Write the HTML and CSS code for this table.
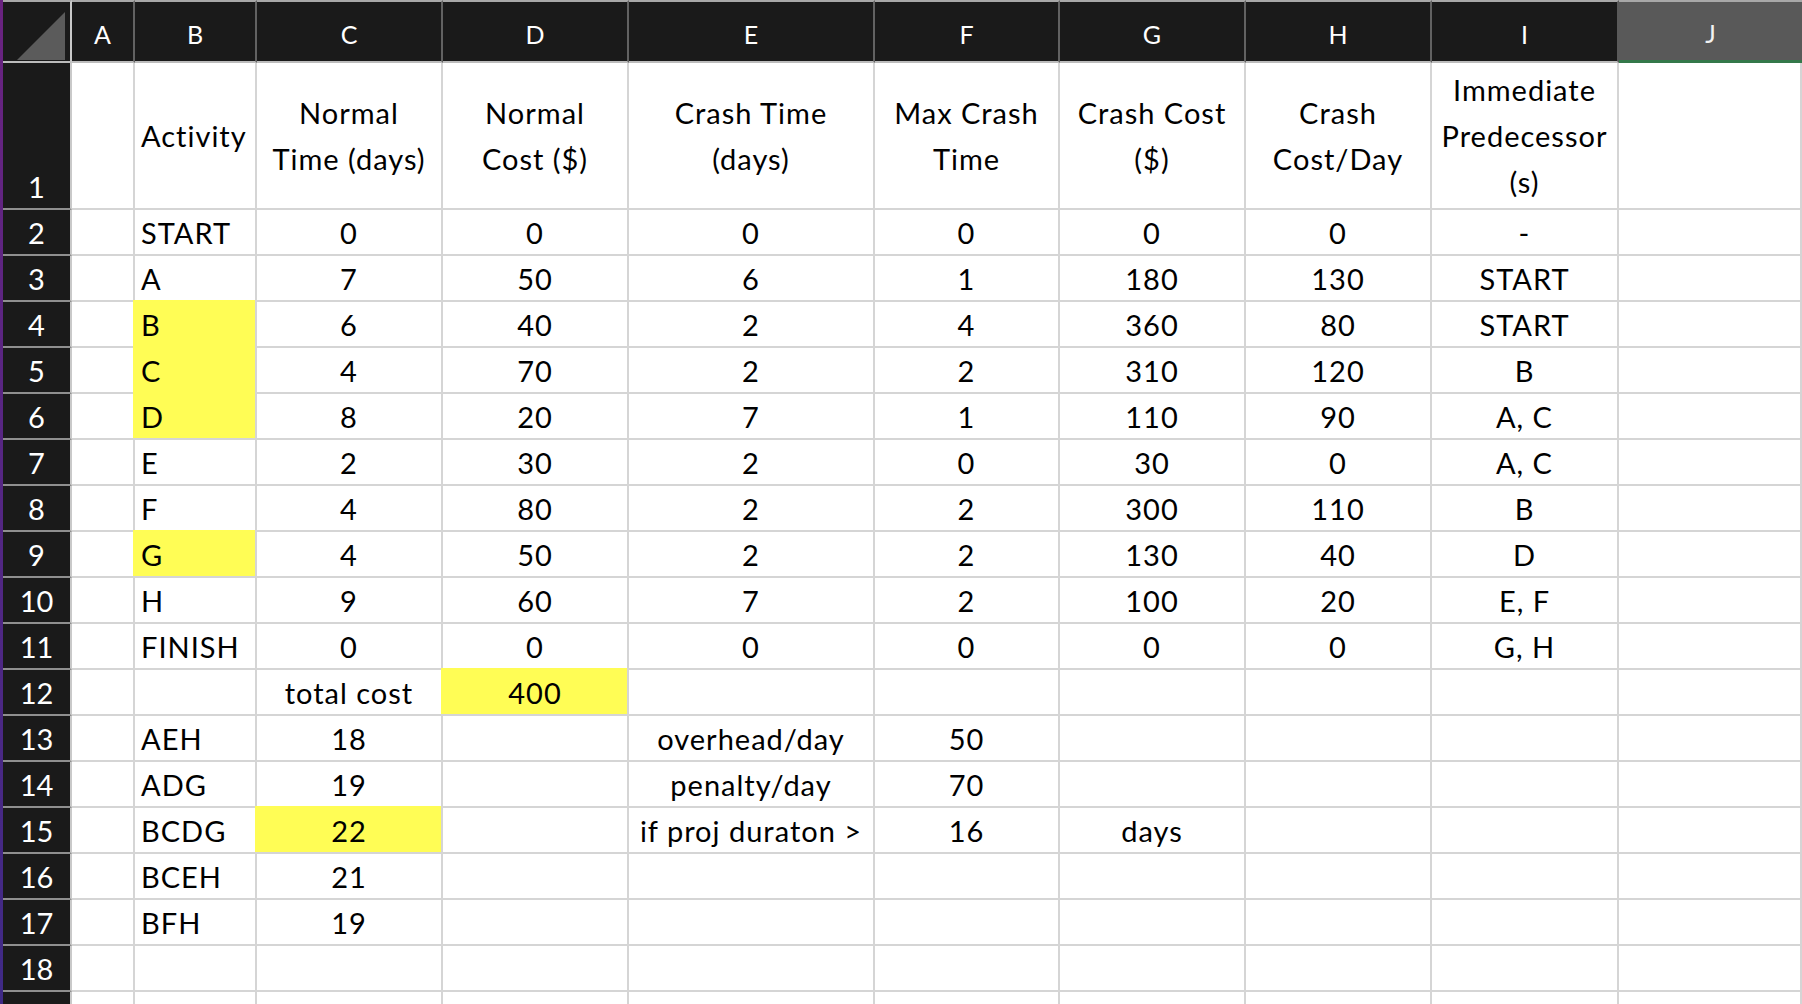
FILE: index.html
```html
<!DOCTYPE html>
<html lang="en">
<head>
<meta charset="utf-8">
<title>Crashing worksheet</title>
<link rel="stylesheet" href="styles.css">
</head>
<body>
<div class="page">
  <div class="strip"></div>
  <div class="sheet">
    <div class="ch corner"><svg width="52" height="52" viewBox="0 0 52 52"><polygon points="48,4 48,52 0,52" fill="#5b5b5b"/></svg></div>
    <div class="ch">A</div><div class="ch">B</div><div class="ch">C</div><div class="ch">D</div><div class="ch">E</div><div class="ch">F</div><div class="ch">G</div><div class="ch">H</div><div class="ch ch-i">I</div><div class="ch ch-sel">J</div>

    <div class="rh">1</div>
    <div class="c hd"></div><div class="c hd l">Activity</div><div class="c hd">Normal<br>Time (days)</div><div class="c hd">Normal<br>Cost ($)</div><div class="c hd">Crash Time<br>(days)</div><div class="c hd">Max Crash<br>Time</div><div class="c hd">Crash Cost<br>($)</div><div class="c hd">Crash<br>Cost/Day</div><div class="c hd">Immediate<br>Predecessor<br>(s)</div><div class="c hd"></div>

    <div class="rh">2</div>
    <div class="c"></div><div class="c l">START</div><div class="c">0</div><div class="c">0</div><div class="c">0</div><div class="c">0</div><div class="c">0</div><div class="c">0</div><div class="c">-</div><div class="c"></div>

    <div class="rh">3</div>
    <div class="c"></div><div class="c l">A</div><div class="c">7</div><div class="c">50</div><div class="c">6</div><div class="c">1</div><div class="c">180</div><div class="c">130</div><div class="c">START</div><div class="c"></div>

    <div class="rh">4</div>
    <div class="c"></div><div class="c l y">B</div><div class="c">6</div><div class="c">40</div><div class="c">2</div><div class="c">4</div><div class="c">360</div><div class="c">80</div><div class="c">START</div><div class="c"></div>

    <div class="rh">5</div>
    <div class="c"></div><div class="c l y">C</div><div class="c">4</div><div class="c">70</div><div class="c">2</div><div class="c">2</div><div class="c">310</div><div class="c">120</div><div class="c">B</div><div class="c"></div>

    <div class="rh">6</div>
    <div class="c"></div><div class="c l y">D</div><div class="c">8</div><div class="c">20</div><div class="c">7</div><div class="c">1</div><div class="c">110</div><div class="c">90</div><div class="c">A, C</div><div class="c"></div>

    <div class="rh">7</div>
    <div class="c"></div><div class="c l">E</div><div class="c">2</div><div class="c">30</div><div class="c">2</div><div class="c">0</div><div class="c">30</div><div class="c">0</div><div class="c">A, C</div><div class="c"></div>

    <div class="rh">8</div>
    <div class="c"></div><div class="c l">F</div><div class="c">4</div><div class="c">80</div><div class="c">2</div><div class="c">2</div><div class="c">300</div><div class="c">110</div><div class="c">B</div><div class="c"></div>

    <div class="rh">9</div>
    <div class="c"></div><div class="c l y">G</div><div class="c">4</div><div class="c">50</div><div class="c">2</div><div class="c">2</div><div class="c">130</div><div class="c">40</div><div class="c">D</div><div class="c"></div>

    <div class="rh">10</div>
    <div class="c"></div><div class="c l">H</div><div class="c">9</div><div class="c">60</div><div class="c">7</div><div class="c">2</div><div class="c">100</div><div class="c">20</div><div class="c">E, F</div><div class="c"></div>

    <div class="rh">11</div>
    <div class="c"></div><div class="c l">FINISH</div><div class="c">0</div><div class="c">0</div><div class="c">0</div><div class="c">0</div><div class="c">0</div><div class="c">0</div><div class="c">G, H</div><div class="c"></div>

    <div class="rh">12</div>
    <div class="c"></div><div class="c l"></div><div class="c">total cost</div><div class="c y">400</div><div class="c"></div><div class="c"></div><div class="c"></div><div class="c"></div><div class="c"></div><div class="c"></div>

    <div class="rh">13</div>
    <div class="c"></div><div class="c l">AEH</div><div class="c">18</div><div class="c"></div><div class="c">overhead/day</div><div class="c">50</div><div class="c"></div><div class="c"></div><div class="c"></div><div class="c"></div>

    <div class="rh">14</div>
    <div class="c"></div><div class="c l">ADG</div><div class="c">19</div><div class="c"></div><div class="c">penalty/day</div><div class="c">70</div><div class="c"></div><div class="c"></div><div class="c"></div><div class="c"></div>

    <div class="rh">15</div>
    <div class="c"></div><div class="c l">BCDG</div><div class="c y">22</div><div class="c"></div><div class="c">if proj duraton &gt;</div><div class="c">16</div><div class="c">days</div><div class="c"></div><div class="c"></div><div class="c"></div>

    <div class="rh">16</div>
    <div class="c"></div><div class="c l">BCEH</div><div class="c">21</div><div class="c"></div><div class="c"></div><div class="c"></div><div class="c"></div><div class="c"></div><div class="c"></div><div class="c"></div>

    <div class="rh">17</div>
    <div class="c"></div><div class="c l">BFH</div><div class="c">19</div><div class="c"></div><div class="c"></div><div class="c"></div><div class="c"></div><div class="c"></div><div class="c"></div><div class="c"></div>

    <div class="rh">18</div>
    <div class="c"></div><div class="c l"></div><div class="c"></div><div class="c"></div><div class="c"></div><div class="c"></div><div class="c"></div><div class="c"></div><div class="c"></div><div class="c"></div>

    <div class="rh">19</div>
    <div class="c"></div><div class="c l"></div><div class="c"></div><div class="c"></div><div class="c"></div><div class="c"></div><div class="c"></div><div class="c"></div><div class="c"></div><div class="c"></div>
  </div>
</div>
</body>
</html>
```

FILE: styles.css
```css
html, body {
  margin: 0;
  padding: 0;
  background: #ffffff;
}

body {
  width: 1802px;
  height: 1004px;
  overflow: hidden;
  font-family: Lato, "Open Sans", sans-serif;
}

.page {
  display: flex;
  width: 1802px;
  height: 1004px;
  overflow: hidden;
}

.strip {
  flex: 0 0 3px;
  background: linear-gradient(#6a2380, #3f2a86);
}

.sheet {
  flex: 0 0 1799px;
  display: grid;
  grid-template-columns: 69px 63px 122px 186px 186px 246px 185px 186px 186px 187px 183px;
  grid-template-rows: 63px 147px repeat(18, 46px);
  align-content: start;
}

/* column headers */
.ch {
  box-sizing: border-box;
  background: #1a1a1a;
  color: #ffffff;
  font-size: 25px;
  border-top: 2px solid #a8a8a8;
  border-bottom: 2px solid #bcbcbc;
  border-right: 2px solid #626262;
  display: flex;
  align-items: center;
  justify-content: center;
  padding-top: 4px;
}

.corner {
  border-right-color: #c9c9c9;
  align-items: flex-start;
  justify-content: flex-start;
  padding: 6px 0 0 14px;
}

.corner svg {
  display: block;
}

.ch-i {
  border-right-color: #595959;
}

.ch-sel {
  background: #595959;
  color: #f2f2f2;
  border-right: 0;
  border-bottom: 3px solid #34784a;
}

/* row headers */
.rh {
  box-sizing: border-box;
  background: #1a1a1a;
  color: #ffffff;
  font-size: 29px;
  line-height: 34px;
  border-right: 2px solid #c9c9c9;
  border-bottom: 2px solid #8f8f8f;
  display: flex;
  align-items: flex-end;
  justify-content: center;
  padding-bottom: 4px;
}

/* cells */
.c {
  box-sizing: border-box;
  background: #ffffff;
  color: #000000;
  font-size: 29px;
  line-height: 34px;
  letter-spacing: 1px;
  white-space: nowrap;
  border-right: 2px solid #d5d5d5;
  border-bottom: 2px solid #d5d5d5;
  display: flex;
  align-items: flex-end;
  justify-content: center;
  padding: 0 2px 4px;
}

.c.l {
  justify-content: flex-start;
  padding-left: 6px;
}

.c.hd {
  align-items: center;
  text-align: center;
  line-height: 46px;
  padding-bottom: 0;
}

.c.hd.l {
  text-align: left;
}

.c.y {
  background: #fffd55;
  box-shadow: -2px -2px 0 0 #fffd55;
}
```
